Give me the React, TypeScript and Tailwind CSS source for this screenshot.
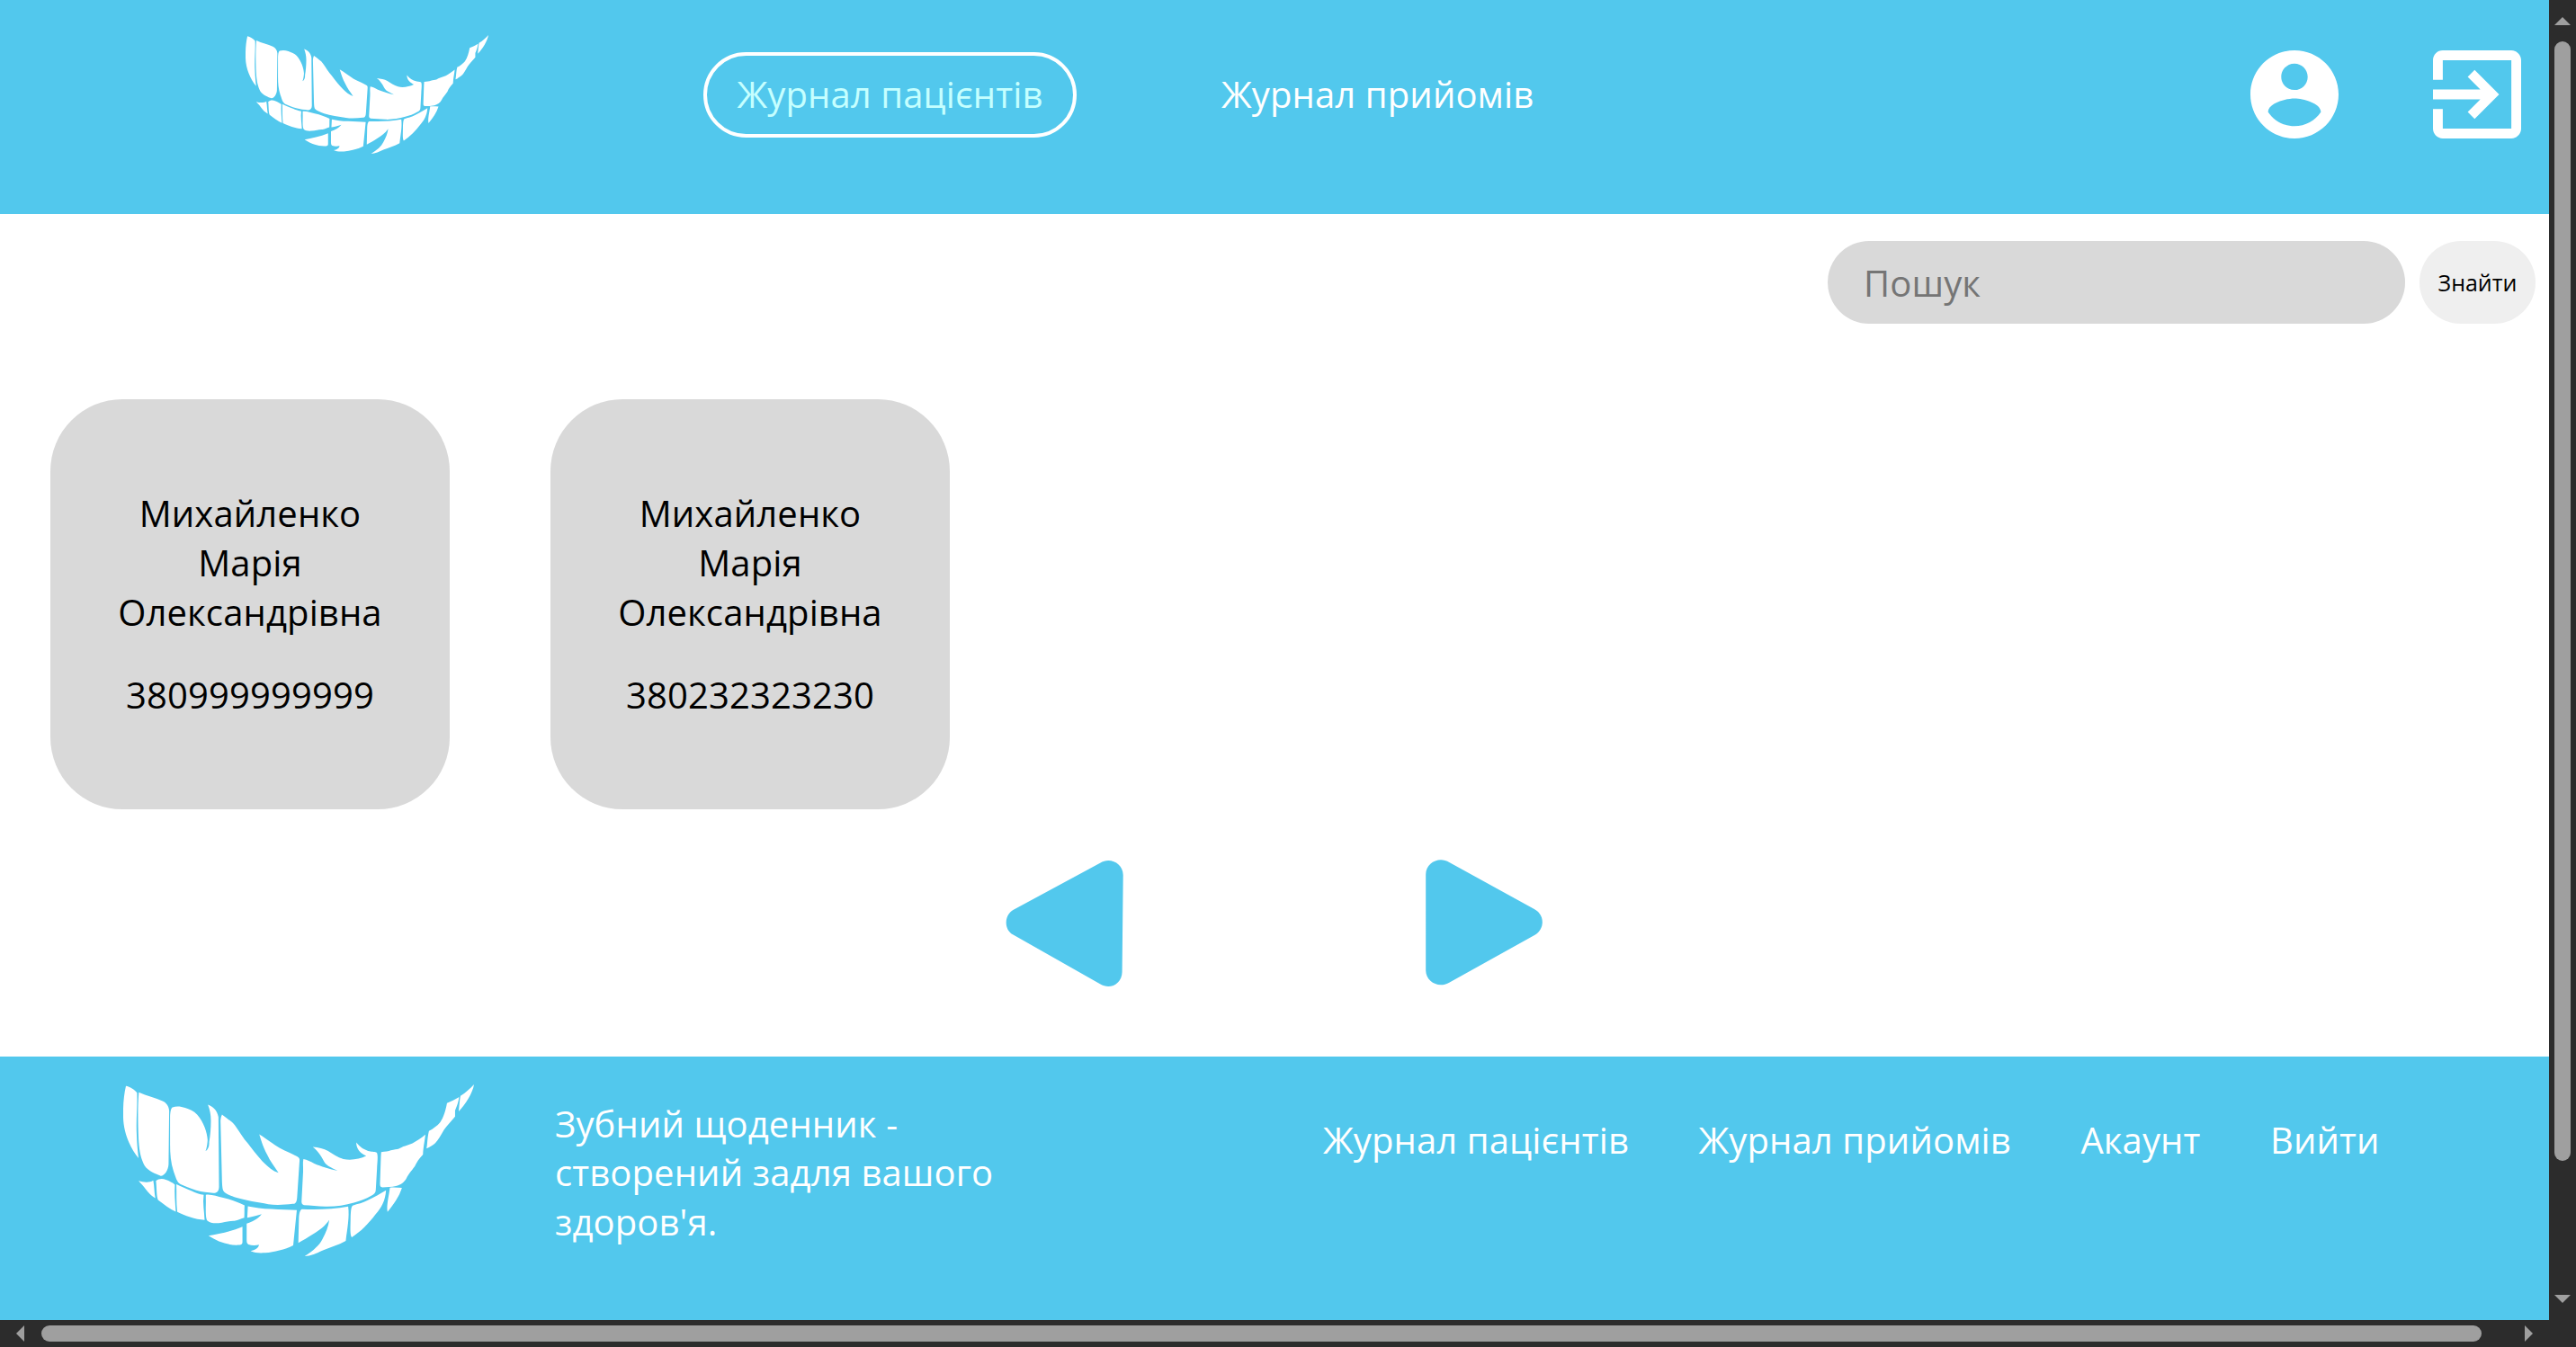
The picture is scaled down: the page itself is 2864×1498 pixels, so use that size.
const FEATHER_PATHS = [
  "M121 85C134 87 150 97 158 108C160 150 154 200 157 250C158 280 160 300 163 325C135 292 113 240 112 190C111 150 114 115 121 85Z",
  "M164 106C190 118 220 125 243 135C256 141 264 152 265 168L263 345C262 365 250 383 237 384C220 378 195 368 183 350C170 325 165 300 163 260C161 210 160 150 164 106Z",
  "M276 156C290 151 305 153 318 158C332 163 347 168 358 180C380 205 392 240 393 265C392 280 390 292 386 302C395 296 399 285 398 272C402 250 404 225 404 200C404 180 400 162 394 147C408 152 425 164 429 188L431 420C431 434 424 442 412 441C395 439 375 438 355 432C335 425 315 418 303 412C290 406 286 385 280 370C270 340 268 310 268 280L268 185C269 172 270 160 276 156Z",
  "M441 180C460 195 475 204 484 216C500 238 512 260 527 276C545 300 565 325 580 340C595 355 610 368 629 374C615 352 600 335 592 315C578 290 572 268 565 246C585 258 610 277 632 291C655 303 680 313 693 321C698 324 700 328 699 335L691 455C690 470 686 478 676 477C650 480 620 482 595 478C560 472 520 466 490 457C470 450 455 444 448 437C442 431 442 420 441 405L436 200C437 190 439 184 441 180Z",
  "M712 328C725 330 735 336 748 343C770 352 800 362 826 367C805 357 790 350 783 340C774 325 764 303 743 288C762 290 780 293 794 301C810 311 825 322 845 328C870 334 900 328 921 318C902 309 888 295 888 273C900 288 915 299 935 303C945 305 955 304 957 308C961 318 958 340 957 360L953 430C953 440 948 446 938 450C920 462 900 467 880 473C850 482 815 487 785 486C760 484 735 482 714 481C707 480 705 474 706 465L711 370C712 355 709 340 712 328Z",
  "M971 305C985 303 995 302 1003 299C1015 297 1022 296 1030 294C1040 287 1060 282 1075 276C1090 268 1105 258 1118 247C1117 265 1111 285 1110 313C1098 325 1088 340 1083 352C1070 370 1062 378 1056 390C1048 406 1035 414 1020 418C1005 421 990 422 975 422C969 421 967 418 967 410L970 320Z",
  "M1130 235C1145 226 1158 217 1167 206C1179 190 1186 165 1190 142C1204 136 1218 129 1230 122C1229 140 1221 155 1217 167L1217 187C1203 203 1190 218 1180 231C1170 248 1161 265 1151 275C1143 282 1133 288 1122 293C1125 275 1125 253 1130 235Z",
  "M1280 80C1276 108 1251 148 1229 170C1231 152 1232 132 1235 118C1252 108 1267 94 1280 80Z",
  "M163 401C180 405 198 408 212 399C216 418 215 440 219 458C202 449 195 438 188 430C180 418 171 410 163 401Z",
  "M221 401C230 392 244 392 254 397C265 401 277 407 284 413C282 440 285 470 287 503C268 494 246 478 228 464C222 450 224 425 221 401Z",
  "M289 412C303 419 320 426 340 434C353 440 367 445 380 447C376 475 382 503 383 531C352 529 316 516 292 504C288 475 290 440 289 412Z",
  "M387 447C405 444 425 453 445 457C470 462 495 472 516 482C515 497 516 510 515 523C505 525 496 531 482 534C465 533 450 539 430 541C415 542 400 541 392 533C384 522 388 480 387 462Z",
  "M527 485C550 489 575 494 605 494C635 496 665 496 690 498L678 615C650 629 615 637 585 640C568 641 550 641 536 634C551 631 563 624 564 613C553 616 540 616 529 612C523 609 523 602 523 594L523 543C542 536 560 528 573 511C560 514 545 520 525 523Z",
  "M396 583C430 577 470 569 509 553L509 604C509 612 503 614 494 614C460 615 425 602 396 583Z",
  "M707 495C750 496 810 497 861 486C866 520 858 560 853 600C828 614 800 622 775 632C757 641 735 650 716 651C745 633 765 615 775 595C787 573 795 554 798 531C785 550 765 566 745 577C727 589 710 598 695 607L697 525C698 510 700 497 707 495Z",
  "M876 483C893 477 910 475 925 466C948 455 968 443 987 432C985 465 972 490 952 512C930 542 902 570 873 588C866 580 869 550 869 520C870 505 870 488 876 483Z",
  "M1000 423C1014 422 1028 423 1040 424C1031 453 1012 480 992 504C988 480 997 450 1000 423Z",
];

function FeatherLogo({ className }: { className: string }) {
  return (
    <svg viewBox="112 80 1168 571" preserveAspectRatio="none" fill="#fff" className={className}>
      {FEATHER_PATHS.map((d) => (
        <path key={d} d={d} />
      ))}
    </svg>
  );
}

function AccountIcon() {
  return (
    <svg viewBox="2 2 20 20" fill="#fff" className="h-[98px] w-[98px]">
      <path d="M12 2C6.48 2 2 6.48 2 12s4.48 10 10 10 10-4.48 10-10S17.52 2 12 2zm0 3c1.66 0 3 1.34 3 3s-1.34 3-3 3-3-1.34-3-3 1.34-3 3-3zm0 14.2c-2.5 0-4.71-1.28-6-3.22.03-1.99 4-3.08 6-3.08 1.99 0 5.97 1.09 6 3.08-1.29 1.94-3.5 3.22-6 3.22z" />
    </svg>
  );
}

function ExitIcon() {
  return (
    <svg viewBox="3 3 18 18" fill="#fff" className="h-[98px] w-[98px]">
      <path d="M10.09 15.59 11.5 17l5-5-5-5-1.41 1.41L12.67 11H3v2h9.67l-2.58 2.59zM19 3H5c-1.11 0-2 .9-2 2v4h2V5h14v14H5v-4H3v4c0 1.1.89 2 2 2h14c1.1 0 2-.9 2-2V5c0-1.1-.9-2-2-2z" />
    </svg>
  );
}

function Header() {
  return (
    <header className="flex h-[238px] items-start bg-[#52c8ed] text-white">
      <FeatherLogo className="mt-[39px] ml-[273px] h-[132px] w-[270px]" />
      <nav className="mt-[58px] ml-[239px] flex gap-[125px]">
        <a className="flex h-[95px] w-[415px] justify-center rounded-[50px] border-4 border-white pt-[15px] whitespace-nowrap text-[#c5ffff]">
          Журнал пацієнтів
        </a>
        <a className="flex h-[95px] w-[415px] pt-[19px] pl-[36px] whitespace-nowrap">Журнал прийомів</a>
      </nav>
      <div className="mt-[56px] mr-[31px] ml-auto flex gap-[105px]">
        <AccountIcon />
        <ExitIcon />
      </div>
    </header>
  );
}

function SearchBar() {
  return (
    <form className="mt-[30px] mr-[15px] flex justify-end gap-4">
      <input
        placeholder="Пошук"
        className="h-[92px] w-[642px] rounded-[50px] bg-[#d9d9d9] px-[40px] tracking-[0.12px] outline-none placeholder:text-[#757575] placeholder:opacity-100"
      />
      <button
        type="button"
        className="h-[92px] w-[129px] rounded-[50px] bg-[#efefef] text-[25px] tracking-normal text-black"
      >
        Знайти
      </button>
    </form>
  );
}

const PATIENTS = [
  { name: ["Михайленко", "Марія", "Олександрівна"], phone: "380999999999" },
  { name: ["Михайленко", "Марія", "Олександрівна"], phone: "380232323230" },
];

function Patients() {
  return (
    <section className="mt-[84px] ml-14 flex gap-28">
      {PATIENTS.map((patient) => (
        <article
          key={patient.phone}
          className="flex h-[456px] w-[444px] flex-col items-center rounded-[80px] bg-[#d9d9d9] pt-[99px] text-black"
        >
          <div className="text-center">
            {patient.name.map((part) => (
              <p key={part}>{part}</p>
            ))}
          </div>
          <p className="mt-[37px]">{patient.phone}</p>
        </article>
      ))}
    </section>
  );
}

function Pager() {
  return (
    <div className="mt-[55px] ml-[1118px] flex items-start gap-[336px]">
      <svg viewBox="1118 955 131 143" fill="#52c8ed" className="h-[143px] w-[131px]">
        <path d="M1223.1 959.7C1234.500 952.8 1248.500 960.5 1248.700 973L1247.600 1080.700C1247.400 1094 1234.500 1101.300 1223 1094.300L1126 1039.300C1116 1033.500 1116.200 1017.500 1126.800 1011.700Z" />
      </svg>
      <svg viewBox="1585 955 131 143" fill="#52c8ed" className="h-[143px] w-[131px]">
        <path d="M1611.300 959C1600 952 1585.400 959.500 1585.200 972.300V1079.300C1585.400 1092 1599.500 1099.300 1610.800 1093L1706.500 1039.700C1717.700 1033.500 1717.700 1017 1705.800 1011Z" />
      </svg>
    </div>
  );
}

function Footer() {
  return (
    <footer className="flex h-[293px] items-start bg-[#52c8ed] text-white">
      <FeatherLogo className="mt-[31px] ml-[137px] h-[191px] w-[390px] shrink-0" />
      <p className="mt-[47.5px] ml-[90px] w-[500px] leading-[54.5px]">
        Зубний щоденник - створений задля вашого здоров'я.
      </p>
      <nav className="mt-[65px] ml-[354px] flex gap-[77.5px] whitespace-nowrap">
        <a>Журнал пацієнтів</a>
        <a>Журнал прийомів</a>
        <a>Акаунт</a>
        <a>Вийти</a>
      </nav>
    </footer>
  );
}

function VerticalScrollbar() {
  return (
    <div className="flex h-[1468px] w-[30px] flex-col items-center bg-[#2c2c2c]">
      <svg viewBox="0 0 18 9" fill="#9f9f9f" className="mt-[19px] h-[9px] w-[18px]">
        <path d="M9 0 18 9H0Z" />
      </svg>
      <div className="mt-[18px] h-[1245px] w-[18px] rounded-full bg-[#9f9f9f]" />
      <svg viewBox="0 0 18 9" fill="#9f9f9f" className="mt-[149px] h-[9px] w-[18px]">
        <path d="M0 0H18L9 9Z" />
      </svg>
    </div>
  );
}

function HorizontalScrollbar() {
  return (
    <div className="flex h-[30px] w-full items-center bg-[#2c2c2c]">
      <svg viewBox="0 0 9 18" fill="#9f9f9f" className="ml-[18px] h-[18px] w-[9px]">
        <path d="M9 0V18L0 9Z" />
      </svg>
      <div className="ml-[19px] h-[18px] w-[2713px] rounded-full bg-[#9f9f9f]" />
      <svg viewBox="0 0 9 18" fill="#9f9f9f" className="ml-[48px] h-[18px] w-[9px]">
        <path d="M0 0 9 9 0 18Z" />
      </svg>
    </div>
  );
}

export default function App() {
  return (
    <div className="h-[1498px] w-[2864px] overflow-hidden bg-white font-['Open_Sans',sans-serif] text-[40px] leading-[55px] tracking-[0.12px]">
      <div className="flex">
        <div className="flex h-[1468px] w-[2834px] flex-col">
          <Header />
          <main className="h-[937px]">
            <SearchBar />
            <Patients />
            <Pager />
          </main>
          <Footer />
        </div>
        <VerticalScrollbar />
      </div>
      <HorizontalScrollbar />
    </div>
  );
}
